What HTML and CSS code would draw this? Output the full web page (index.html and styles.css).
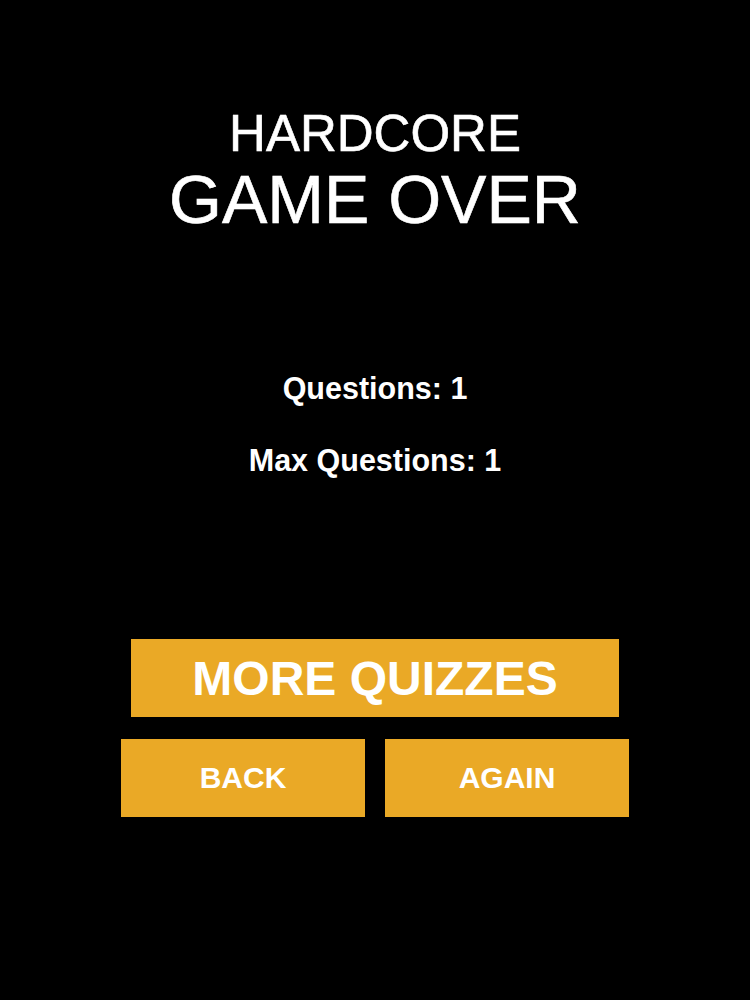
FILE: index.html
```html
<!DOCTYPE html>
<html lang="en">
<head>
    <meta charset="UTF-8">
    <meta name="viewport" content="width=device-width, initial-scale=1.0">
    <title>Hardcore | Game Over</title>
    <link rel="stylesheet" href="styles.css">
</head>
<body>

    <div class="screen">
        <header class="title">
            <div class="mode">HARDCORE</div>
            <h1>GAME OVER</h1>
        </header>

        <div class="stats">
            <p>Questions: 1</p>
            <p>Max Questions: 1</p>
        </div>

        <div class="actions">
            <button class="btn btn-wide">MORE QUIZZES</button>
            <div class="btn-row">
                <button class="btn">BACK</button>
                <button class="btn">AGAIN</button>
            </div>
        </div>
    </div>

</body>
</html>
```

FILE: styles.css
```css
:root {
    --bg: #000000;
    --text: #ffffff;
    --accent: #eaa926;
}

body {
    margin: 0;
    background: var(--bg);
    color: var(--text);
    font-family: 'Liberation Sans', Arial, sans-serif;
}

.screen {
    display: flex;
    flex-direction: column;
    align-items: center;
    min-height: 1000px;
    padding-top: 104px;
    box-sizing: border-box;
}

/* Title */
.title {
    text-align: center;
    -webkit-text-stroke: 0.6px var(--text);
}

.mode {
    font-size: 51px;
    line-height: 60px;
}

h1 {
    margin: 0;
    font-size: 68px;
    font-weight: normal;
    line-height: 70px;
}

/* Stats */
.stats {
    margin-top: 134px;
    display: flex;
    flex-direction: column;
    align-items: center;
    gap: 32px;
}

.stats p {
    margin: 0;
    font-size: 30.5px;
    font-weight: bold;
    line-height: 40px;
}

/* Buttons */
.actions {
    margin-top: 159px;
    display: flex;
    flex-direction: column;
    align-items: center;
    gap: 22px;
}

.btn-row {
    display: flex;
    gap: 20px;
}

.btn {
    width: 244px;
    height: 78px;
    padding: 0;
    border: none;
    border-radius: 0;
    background: var(--accent);
    color: var(--text);
    font-family: inherit;
    font-size: 30px;
    font-weight: bold;
    cursor: pointer;
}

.btn-wide {
    width: 488px;
    font-size: 48px;
}
```
